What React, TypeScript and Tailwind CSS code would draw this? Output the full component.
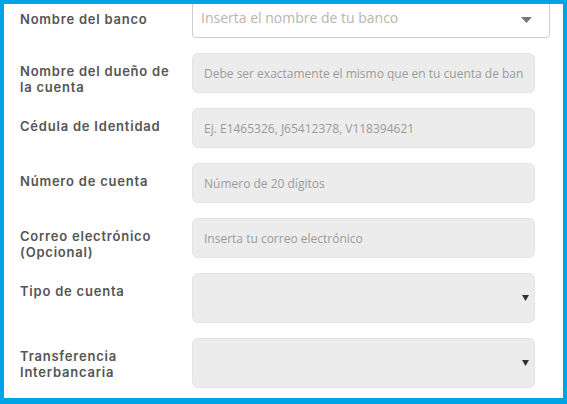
import React from 'react';

const labelCls =
  "w-[158px] pt-[10px] text-[13px] leading-[16px] font-semibold tracking-[0.06em] text-[#555]";
const inputCls =
  "w-[343px] h-[40px] rounded-[6px] bg-[#ececec] border border-[#e4e4e4] px-[11px] text-[12px] text-[#666] outline-none placeholder:text-[#9b9b9b]";

const phFont = { fontFamily: '"Open Sans", Lato, sans-serif' };

interface FieldProps {
  label: React.ReactNode;
  placeholder: string;
}

const TextField: React.FC<FieldProps> = ({ label, placeholder }) => (
  <div className="flex gap-[14px] h-[40px]">
    <div className={labelCls}>{label}</div>
    <input type="text" placeholder={placeholder} className={inputCls} style={phFont} />
  </div>
);

const SelectField: React.FC<{ label: React.ReactNode }> = ({ label }) => (
  <div className="flex gap-[14px] h-[50px]">
    <div className={labelCls}>{label}</div>
    <div className="relative w-[343px] h-[50px] rounded-[6px] bg-[#ececec] border border-[#e4e4e4]">
      <select className="w-full h-full appearance-none bg-transparent outline-none px-[12px]" defaultValue="">
        <option value=""></option>
      </select>
      <span className="pointer-events-none absolute right-[5px] top-1/2 -translate-y-1/2">
        <svg width="7" height="6" viewBox="0 0 7 6">
          <path d="M0 0h7L3.5 6z" fill="#333" />
        </svg>
      </span>
    </div>
  </div>
);

export default function App() {
  return (
    <div className="w-[567px] h-[404px] bg-white border-t-4 border-l-4 border-r-4 border-b-[6px] border-[#00a2e8] overflow-hidden" style={{ fontFamily: 'Inter, "Liberation Sans", sans-serif' }}>
      <div className="flex flex-col gap-[15px] pl-[16px] mt-[-8px]">
        {/* Banco */}
        <div className="flex gap-[14px] h-[42px]">
          <div className={labelCls + " pt-[15px]"}>Nombre del banco</div>
          <div className="relative w-[358px] h-[42px] rounded-[4px] bg-white border border-[#cfcfcf] flex items-center pl-[8px]">
            <span className="text-[14px] text-[#b6b6ad]" style={phFont}>
              Inserta el nombre de tu banco
            </span>
            <span className="absolute right-[17px] top-[20px]">
              <svg width="11" height="6" viewBox="0 0 11 6">
                <path d="M0 0h11L5.5 6z" fill="#777" />
              </svg>
            </span>
          </div>
        </div>

        <TextField
          label={<>Nombre del dueño de<br />la cuenta</>}
          placeholder="Debe ser exactamente el mismo que en tu cuenta de banco"
        />
        <TextField label="Cédula de Identidad" placeholder="Ej. E1465326, J65412378, V118394621" />
        <TextField label="Número de cuenta" placeholder="Número de 20 dígitos" />
        <TextField
          label={<>Correo electrónico<br />(Opcional)</>}
          placeholder="Inserta tu correo electrónico"
        />
        <SelectField label="Tipo de cuenta" />
        <SelectField label={<>Transferencia<br />Interbancaria</>} />
      </div>
    </div>
  );
}
